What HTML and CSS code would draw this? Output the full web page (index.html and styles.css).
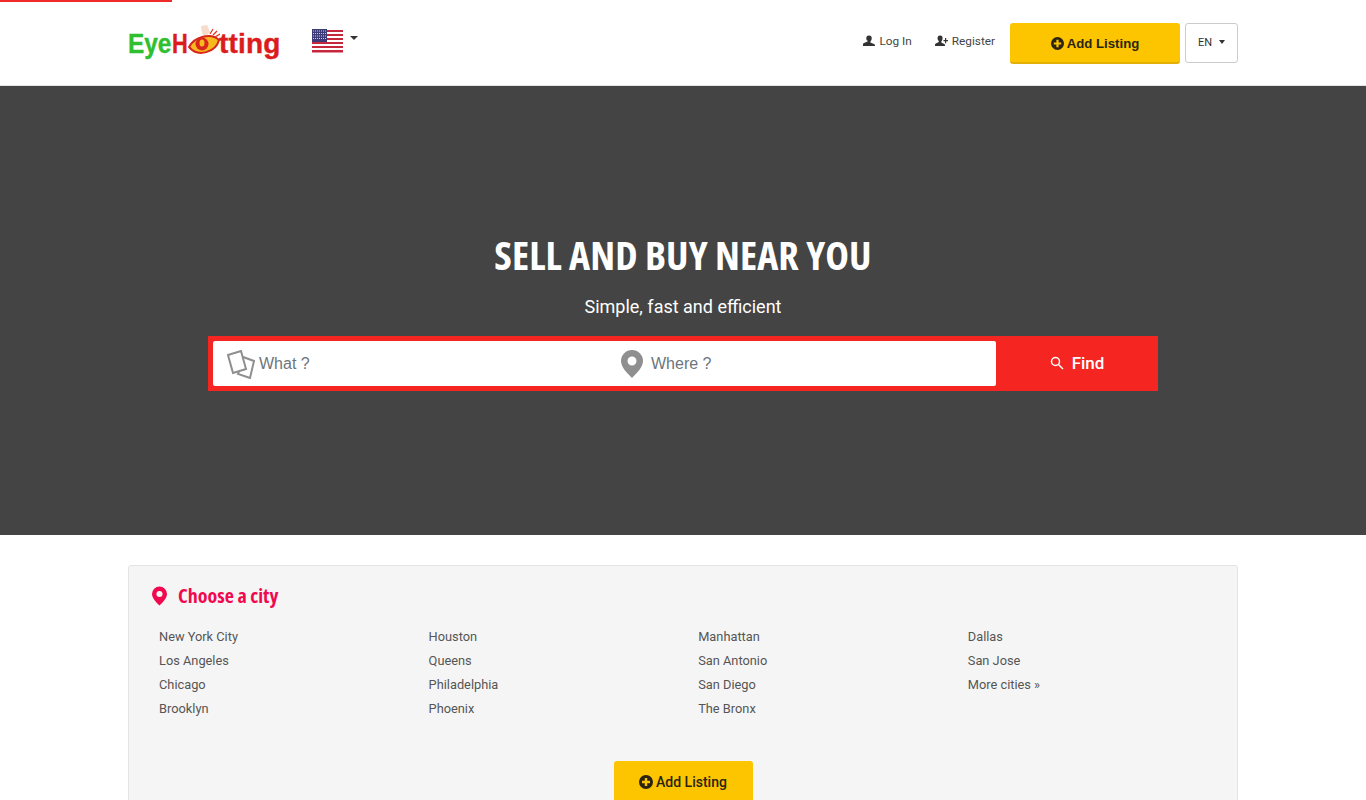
FILE: index.html
```html
<!DOCTYPE html>
<html lang="en">
<head>
    <meta charset="UTF-8">
    <meta name="viewport" content="width=device-width, initial-scale=1.0">
    <title>EyeHotting - Sell and buy near you</title>
    <link rel="stylesheet" href="styles.css">
</head>
<body>
    <div class="progress"></div>
    <nav class="navbar">
        <div class="nav-container">
            <a href="#" class="logo">
                <span class="logo-green">Eye</span><span class="logo-red logo-h">H</span>
                <svg class="logo-eye" width="32" height="36" viewBox="0 0 32 36">
                    <path d="M13 1 L19 0 L22 7 L17 12 L14 8 Z" fill="#f6dccb"/>
                    <path d="M1 22 C6 12 23 7 31 15 C28 27 10 33 1 22 Z" fill="#f6b91e" stroke="#d8261c" stroke-width="2"/>
                    <circle cx="14" cy="19" r="6.500" fill="#d8261c"/>
                    <ellipse cx="14" cy="18" rx="2.500" ry="3.500" fill="#f6b91e"/>
                    <path d="M22 9 L25 4 M25 10 L29 6 M27 12 L32 9" stroke="#e0301e" stroke-width="1.200"/>
                </svg>
                <span class="logo-red logo-tail">tting</span>
            </a>
            <a href="#" class="flag-toggle">
                <svg width="31" height="24" viewBox="0 0 31 24">
                    <rect width="31" height="24" fill="#fff"/>
                    <path d="M0 1h31v2H0zM0 5h31v2H0zM0 9h31v2H0zM0 13h31v2H0zM0 17h31v2H0zM0 21h31v2.500H0z" fill="#c5283d"/>
                    <rect width="15" height="13" fill="#3c3b78"/>
                    <path d="M1 2h13M1 4.500h13M1 7h13M1 9.500h13" stroke="#c8cbe6" stroke-width="1" stroke-dasharray="1 1"/>
                </svg>
                <span class="caret"></span>
            </a>
            <div class="nav-actions">
                <a href="#" class="nav-link">
                    <svg width="12" height="12" viewBox="0 0 12 12"><path d="M6 0.500a2.700 2.700 0 0 1 2.700 2.900c0 1.300-.7 2.600-1.300 3.100v1l3.600 1.500c.6.300 1 .7 1 1.300V11H0v-1.700c0-.6.400-1 1-1.300l3.600-1.500v-1C4 5.900 3.300 4.700 3.300 3.400A2.700 2.700 0 0 1 6 .5z" fill="#333"/></svg>
                    Log In
                </a>
                <a href="#" class="nav-link">
                    <svg width="13" height="12" viewBox="0 0 13 12"><path d="M5 .5a2.500 2.500 0 0 1 2.500 2.900c0 1.300-.6 2.500-1.200 3v1l3 1.500c.5.300.7.700.7 1.300V11H0V9.700c0-.6.300-1 .8-1.300l3-1.500v-1c-.6-.5-1.300-1.700-1.300-3A2.500 2.500 0 0 1 5 .5zM10 3h1.200v2H13v1.200h-1.800v2H10v-2H8.500V5H10z" fill="#333"/></svg>
                    Register
                </a>
                <a href="#" class="add-btn">
                    <svg width="13" height="13" viewBox="0 0 14 14"><path d="M7 0a7 7 0 1 1 0 14A7 7 0 0 1 7 0zM5.800 3v2.800H3v2.400h2.800V11h2.400V8.200H11V5.800H8.200V3z" fill="#2b2410" fill-rule="evenodd"/></svg>
                    Add Listing
                </a>
                <a href="#" class="lang-btn">EN <span class="caret small"></span></a>
            </div>
        </div>
    </nav>

    <section class="hero">
        <h1>SELL AND BUY NEAR YOU</h1>
        <p>Simple, fast and efficient</p>
        <form class="search-bar">
            <div class="search-fields">
                <div class="field field-what">
                    <svg width="29" height="29" viewBox="0 0 29 29" fill="none" stroke="#8f8f8f" stroke-width="2">
                        <path d="M1 5 L14 1 L19 19 L6 23 Z"/>
                        <path d="M16 7 L27 11 L23 28 L11 24 L12 21.500"/>
                    </svg>
                    <span>What ?</span>
                </div>
                <div class="field field-where">
                    <svg width="22" height="28" viewBox="0 0 22 28"><path d="M11 0a11 11 0 0 1 11 11c0 6-6 12-11 17C6 23 0 17 0 11A11 11 0 0 1 11 0zm0 6.500a4.500 4.500 0 1 0 0 9 4.500 4.500 0 0 0 0-9z" fill="#8f8f8f" fill-rule="evenodd"/></svg>
                    <span>Where ?</span>
                </div>
            </div>
            <button type="button" class="find-btn">
                <svg width="14" height="14" viewBox="0 0 14 14" fill="none" stroke="#fff" stroke-width="1.500"><circle cx="5.500" cy="5.500" r="4"/><path d="M8.500 8.500 L13 13"/></svg>
                Find
            </button>
        </form>
    </section>

    <div class="container">
        <div class="cities-panel">
            <h2>
                <svg width="15" height="20" viewBox="0 0 22 28"><path d="M11 0a11 11 0 0 1 11 11c0 6-6 12-11 17C6 23 0 17 0 11A11 11 0 0 1 11 0zm0 6.500a4.500 4.500 0 1 0 0 9 4.500 4.500 0 0 0 0-9z" fill="#f0094f" fill-rule="evenodd"/></svg>
                Choose a city
            </h2>
            <ul class="city-list">
                <li>New York City</li><li>Houston</li><li>Manhattan</li><li>Dallas</li>
                <li>Los Angeles</li><li>Queens</li><li>San Antonio</li><li>San Jose</li>
                <li>Chicago</li><li>Philadelphia</li><li>San Diego</li><li>More cities »</li>
                <li>Brooklyn</li><li>Phoenix</li><li>The Bronx</li>
            </ul>
            <div class="panel-action">
                <a href="#" class="add-btn-big">
                    <svg width="14" height="14" viewBox="0 0 14 14"><path d="M7 0a7 7 0 1 1 0 14A7 7 0 0 1 7 0zM5.800 3v2.800H3v2.400h2.800V11h2.400V8.200H11V5.800H8.200V3z" fill="#2b2410" fill-rule="evenodd"/></svg>
                    Add Listing
                </a>
            </div>
        </div>
    </div>
</body>
</html>
```

FILE: styles.css
```css
* { box-sizing: border-box; }
body { font-family: Roboto, Arial, sans-serif; background: #fff; margin: 0; padding: 0; color: #333; }
a { text-decoration: none; color: inherit; }

.progress { position: absolute; top: 0; left: 0; width: 172px; height: 2px; background: #ee2a2a; }

.navbar { background: #fff; height: 86px; border-bottom: 1px solid #e4e4e4; }
.nav-container { width: 1110px; margin: 0 auto; height: 85px; display: flex; align-items: flex-start; }

.logo { display: flex; align-items: center; width: 152px; height: 38px; margin-top: 25px; font-family: "Liberation Sans", Arial, sans-serif; font-size: 28px; font-weight: bold; -webkit-text-stroke: 0.4px; }
.logo-green { color: #2fbf2f; width: 44px; transform: scaleX(0.87); transform-origin: left; }
.logo-red { color: #dc1c1c; }
.logo-h { width: 16px; transform: scaleX(0.78); transform-origin: left; }
.logo-eye { margin: -3px -1px 0 0; flex: none; }
.logo-tail { letter-spacing: 0.2px; }

.flag-toggle { display: flex; align-items: flex-start; margin: 29px 0 0 32px; }
.caret { display: inline-block; width: 0; height: 0; margin: 7px 0 0 7px; border-top: 4px solid #333; border-left: 4px solid transparent; border-right: 4px solid transparent; }
.caret.small { margin: 0 0 2px 4px; border-width: 4px 3.500px 0; vertical-align: middle; }

.nav-actions { margin-left: auto; display: flex; align-items: flex-start; padding-top: 23px; }
.nav-link { display: flex; align-items: center; gap: 4px; height: 36px; font-size: 11.800px; color: #444; margin-right: 23px; }
.nav-link + .nav-link { margin-right: 15px; }
.add-btn { display: flex; align-items: center; justify-content: center; gap: 3px; width: 170px; height: 41px; padding-top: 1px; background: #fdc400; border-bottom: 2px solid #e3b007; border-radius: 3px; font-family: "Liberation Sans", Arial, sans-serif; font-size: 13.200px; font-weight: bold; color: #2b2410; }
.lang-btn { display: block; width: 53px; height: 40px; margin-left: 5px; border: 1px solid #ccc; border-radius: 3px; font-size: 11px; line-height: 38px; text-align: center; color: #333; }

.hero { background: #444; height: 449px; display: flex; flex-direction: column; align-items: center; padding-top: 144px; }
.hero h1 { margin: 0; font-family: "Open Sans", sans-serif; font-stretch: 75%; font-size: 40px; font-weight: 700; line-height: 50px; letter-spacing: 0.1px; color: #fff; }
.hero p { margin: 15px 0 0; font-size: 18px; line-height: 24px; color: #fff; }

.search-bar { display: flex; width: 950px; height: 55px; margin-top: 17px; background: #f52622; padding: 5px 0 5px 5px; }
.search-fields { flex: 1; display: flex; background: #fff; border-radius: 2px; }
.field { display: flex; align-items: center; font-family: "Liberation Sans", Arial, sans-serif; font-size: 16px; color: #6c757d; }
.field-what { width: 398px; padding-left: 14px; gap: 3px; }
.field-what svg { margin-top: 1px; }
.field-where { padding-left: 10px; gap: 8px; }
.find-btn { width: 162px; margin: -5px 0; border: none; background: #f52622; color: #fff; font-family: Roboto, Arial, sans-serif; font-size: 17px; font-weight: 500; display: flex; align-items: center; justify-content: center; gap: 8px; padding: 0 0 2px 0; }

.container { width: 1110px; margin: 30px auto 0; }
.cities-panel { background: #f5f5f5; border: 1px solid #e3e3e3; border-radius: 3px; padding: 15px 23px 30px; }
.cities-panel h2 { display: flex; align-items: center; gap: 11px; margin: 0; font-family: "Open Sans", sans-serif; font-stretch: 75%; font-size: 20px; font-weight: 700; line-height: 30px; color: #f0094f; }
.city-list { list-style: none; margin: 14px 0 0 7px; padding: 0; display: grid; grid-template-columns: repeat(4, 269.600px); grid-auto-rows: 24px; }
.city-list li { font-size: 12.800px; line-height: 24px; color: #555; }
.panel-action { display: flex; justify-content: center; margin-top: 40px; }
.add-btn-big { display: flex; align-items: center; justify-content: center; gap: 3px; width: 139px; height: 42px; background: #fdc400; border-radius: 3px; font-size: 14px; font-weight: 500; color: #2b2410; }
```
